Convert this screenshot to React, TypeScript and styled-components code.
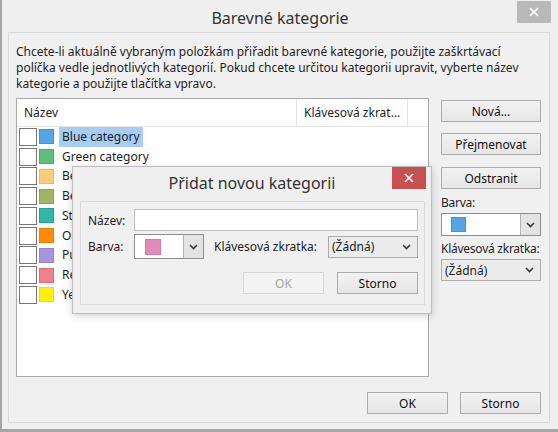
import { FC } from "react";
import styled, { createGlobalStyle } from "styled-components";

const GlobalStyle = createGlobalStyle`
  html, body {
    margin: 0;
    padding: 0;
    background: #efefef;
  }
  body {
    font-family: "Noto Sans", "Open Sans", sans-serif;
    font-size: 12px;
    color: #1e1e1e;
  }
`;

type TCategory = {
    name: string
    color: string
    edge: string
}

const categories: TCategory[] = [
    {name: "Blue category", color: "#52a6e6", edge: "#3f93d3"},
    {name: "Green category", color: "#5ebf7d", edge: "#4cab6a"},
    {name: "Beige category", color: "#ffcb78", edge: "#f0b85e"},
    {name: "Bedrock category", color: "#a3b367", edge: "#909f55"},
    {name: "Steel category", color: "#31b7aa", edge: "#25a296"},
    {name: "Orange category", color: "#ff8c00", edge: "#ef7f00"},
    {name: "Purple category", color: "#a895e1", edge: "#9582d1"},
    {name: "Red category", color: "#f0808a", edge: "#de6c77"},
    {name: "Yellow category", color: "#fff000", edge: "#f0dc00"},
];

const Window = styled.div`
  position: relative;
  box-sizing: border-box;
  width: 558px;
  height: 432px;
  background: #efefef;
  border-left: 2px solid #a6a6a6;
  border-bottom: 3px solid #a6a6a6;
  display: flex;
  flex-direction: column;
`;

const TitleBar = styled.div<{ $height: number }>`
  display: grid;
  grid-template-columns: 1fr auto 1fr;
  height: ${p => p.$height}px;
  flex-shrink: 0;
`;

const Title = styled.div<{ $top: number }>`
  grid-column: 2;
  margin-top: ${p => p.$top}px;
  font-size: 16px;
  line-height: 20px;
  color: #333;
`;

const CloseButton = styled.div<{ $bg: string; $top: number; $right: number }>`
  grid-column: 3;
  justify-self: end;
  margin-top: ${p => p.$top}px;
  margin-right: ${p => p.$right}px;
  width: 34px;
  height: 22px;
  background: ${p => p.$bg};
  display: flex;
  align-items: center;
  justify-content: center;
`;

const Panel = styled.div`
  flex: 1;
  margin: 0 8px 6px 6px;
  border: 1px solid #d9d9d9;
  background: #f0f0f0;
  padding: 11px 8px 8px 7px;
  display: flex;
  flex-direction: column;
`;

const Description = styled.p`
  margin: 0;
  line-height: 16px;
`;

const Body = styled.div`
  display: flex;
  gap: 12px;
  margin-top: 6px;
`;

const ListBox = styled.div`
  box-sizing: border-box;
  width: 413px;
  height: 279px;
  border: 1px solid #a9a9a9;
  background: #fff;
`;

const ListHeader = styled.div`
  display: grid;
  grid-template-columns: 280px 111px 1fr;
  height: 27px;
  border-bottom: 1px solid #e6e6e6;
`;

const HeaderCell = styled.div`
  display: flex;
  align-items: center;
  padding-left: 7px;
  border-right: 1px solid #e6e6e6;
  color: #1e1e1e;

  &:last-child {
    border-right: none;
  }
`;

const Row = styled.div`
  display: flex;
  align-items: center;
  height: 19.75px;
  padding-left: 2px;
`;

const Checkbox = styled.div`
  box-sizing: border-box;
  width: 18px;
  height: 18px;
  border: 1px solid #767676;
  background: #fff;
`;

const Swatch = styled.div<{ $color: string; $edge: string; $size: number }>`
  box-sizing: border-box;
  width: ${p => p.$size}px;
  height: ${p => p.$size}px;
  background: ${p => p.$color};
  border: 1px solid ${p => p.$edge};
`;

const RowSwatch = styled(Swatch)`
  margin-left: 2px;
`;

const RowLabel = styled.div<{ $selected?: boolean }>`
  margin-left: 5px;
  padding: 0 3px;
  height: 20px;
  line-height: 20px;
  background: ${p => (p.$selected ? "#a8cdf4" : "transparent")};
  white-space: nowrap;
`;

const SideColumn = styled.div`
  width: 100px;
  display: flex;
  flex-direction: column;
  padding-top: 2px;
`;

const Button = styled.button<{ $width?: number; $disabled?: boolean }>`
  box-sizing: border-box;
  width: ${p => (p.$width ? `${p.$width}px` : "100%")};
  height: 22px;
  padding: 0;
  font-family: inherit;
  font-size: 12px;
  color: ${p => (p.$disabled ? "#a3a3a3" : "#111")};
  border: 1px solid ${p => (p.$disabled ? "#d6d6d6" : "#acacac")};
  background: ${p => (p.$disabled ? "#f3f3f3" : "linear-gradient(#f2f2f2, #e6e6e6)")};
  cursor: default;
`;

const SideButton = styled(Button)<{ $gap: number }>`
  margin-bottom: ${p => p.$gap}px;
`;

const FieldLabel = styled.div`
  line-height: 14px;
  margin-bottom: 3px;
  white-space: nowrap;
  letter-spacing: -0.25px;
`;

const ColorCombo = styled.div<{ $width?: number; $height: number }>`
  box-sizing: border-box;
  width: ${p => (p.$width ? `${p.$width}px` : "100%")};
  height: ${p => p.$height}px;
  display: flex;
  border: 1px solid #8e8e8e;
  background: #fff;
`;

const ComboValue = styled.div<{ $pad: number }>`
  flex: 1;
  display: flex;
  align-items: center;
  padding-left: ${p => p.$pad}px;
`;

const ComboArrow = styled.div`
  width: 19px;
  border-left: 1px solid #b5b5b5;
  background: #e3e3e3;
  display: flex;
  align-items: center;
  justify-content: center;
`;

const Dropdown = styled.div<{ $width?: number }>`
  box-sizing: border-box;
  width: ${p => (p.$width ? `${p.$width}px` : "100%")};
  height: 22px;
  display: flex;
  align-items: center;
  justify-content: space-between;
  padding: 0 6px 0 3px;
  border: 1px solid #acacac;
  background: #ebebeb;
`;

const SideGroup = styled.div<{ $top: number }>`
  margin-top: ${p => p.$top}px;
`;

const Footer = styled.div`
  display: flex;
  justify-content: flex-end;
  gap: 12px;
  margin-top: 15px;
`;

const Modal = styled.div`
  position: absolute;
  left: 70px;
  top: 166px;
  box-sizing: border-box;
  width: 360px;
  height: 148px;
  border: 1px solid #bdbdbd;
  background: #efefef;
  box-shadow: 0 2px 8px rgba(0, 0, 0, 0.18);
  display: flex;
  flex-direction: column;
`;

const ModalPanel = styled.div`
  margin: 0 6px 7px 7px;
  border: 1px solid #d9d9d9;
  background: #f0f0f0;
  padding: 7px 6px 10px 7px;
  display: flex;
  flex-direction: column;
`;

const FormRow = styled.div<{ $top?: number }>`
  display: flex;
  align-items: center;
  margin-top: ${p => p.$top ?? 0}px;
`;

const FormLabel = styled.div<{ $width?: number; $gap?: number }>`
  width: ${p => (p.$width ? `${p.$width}px` : "auto")};
  margin-left: ${p => p.$gap ?? 0}px;
  white-space: nowrap;
`;

const TextInput = styled.div`
  box-sizing: border-box;
  flex: 1;
  height: 22px;
  border: 1px solid #c4c4c4;
  background: #fff;
`;

const Spacer = styled.div`
  flex: 1;
`;

const ModalButtons = styled.div`
  display: flex;
  justify-content: flex-end;
  gap: 13px;
  margin-top: 13px;
`;

const Chevron: FC = () => (
    <svg width="9" height="6" viewBox="0 0 9 6">
        <path d="M1 1 L4.5 4.5 L8 1" fill="none" stroke="#3a3a3a" strokeWidth="1.6"/>
    </svg>
);

const CrossIcon: FC = () => (
    <svg width="10" height="10" viewBox="0 0 10 10">
        <path d="M1 1 L9 9 M9 1 L1 9" stroke="#fff" strokeWidth="1.6"/>
    </svg>
);

export default function App() {
    return (
        <>
            <GlobalStyle/>
            <Window>
                <TitleBar $height={32}>
                    <Title $top={8}>Barevné kategorie</Title>
                    <CloseButton $bg="#b9b9b9" $top={1} $right={7}>
                        <CrossIcon/>
                    </CloseButton>
                </TitleBar>
                <Panel>
                    <Description>
                        Chcete-li aktuálně vybraným položkám přiřadit barevné kategorie, použijte zaškrtávací
                        políčka vedle jednotlivých kategorií. Pokud chcete určitou kategorii upravit, vyberte název
                        kategorie a použijte tlačítka vpravo.
                    </Description>
                    <Body>
                        <ListBox>
                            <ListHeader>
                                <HeaderCell>Název</HeaderCell>
                                <HeaderCell>Klávesová zkrat...</HeaderCell>
                                <HeaderCell/>
                            </ListHeader>
                            {categories.map((c, i) => (
                                <Row key={c.name}>
                                    <Checkbox/>
                                    <RowSwatch $color={c.color} $edge={c.edge} $size={15}/>
                                    <RowLabel $selected={i === 0}>{c.name}</RowLabel>
                                </Row>
                            ))}
                        </ListBox>
                        <SideColumn>
                            <SideButton $gap={11}>Nová...</SideButton>
                            <SideButton $gap={12}>Přejmenovat</SideButton>
                            <SideButton $gap={0}>Odstranit</SideButton>
                            <SideGroup $top={7}>
                                <FieldLabel>Barva:</FieldLabel>
                                <ColorCombo $height={23}>
                                    <ComboValue $pad={9}>
                                        <Swatch $color="#52a6e6" $edge="#3f93d3" $size={15}/>
                                    </ComboValue>
                                    <ComboArrow><Chevron/></ComboArrow>
                                </ColorCombo>
                            </SideGroup>
                            <SideGroup $top={6}>
                                <FieldLabel>Klávesová zkratka:</FieldLabel>
                                <Dropdown>
                                    <span>(Žádná)</span>
                                    <Chevron/>
                                </Dropdown>
                            </SideGroup>
                        </SideColumn>
                    </Body>
                    <Footer>
                        <Button $width={81}>OK</Button>
                        <Button $width={81}>Storno</Button>
                    </Footer>
                </Panel>

                <Modal>
                    <TitleBar $height={34}>
                        <Title $top={6}>Přidat novou kategorii</Title>
                        <CloseButton $bg="#c75050" $top={0} $right={5}>
                            <CrossIcon/>
                        </CloseButton>
                    </TitleBar>
                    <ModalPanel>
                        <FormRow>
                            <FormLabel $width={46}>Název:</FormLabel>
                            <TextInput/>
                        </FormRow>
                        <FormRow $top={3}>
                            <FormLabel $width={46}>Barva:</FormLabel>
                            <ColorCombo $width={70} $height={25}>
                                <ComboValue $pad={10}>
                                    <Swatch $color="#e38bb8" $edge="#d678a8" $size={16}/>
                                </ComboValue>
                                <ComboArrow><Chevron/></ComboArrow>
                            </ColorCombo>
                            <FormLabel $gap={10}>Klávesová zkratka:</FormLabel>
                            <Spacer/>
                            <Dropdown $width={90}>
                                <span>(Žádná)</span>
                                <Chevron/>
                            </Dropdown>
                        </FormRow>
                        <ModalButtons>
                            <Button $width={81} $disabled>OK</Button>
                            <Button $width={81}>Storno</Button>
                        </ModalButtons>
                    </ModalPanel>
                </Modal>
            </Window>
        </>
    );
}
